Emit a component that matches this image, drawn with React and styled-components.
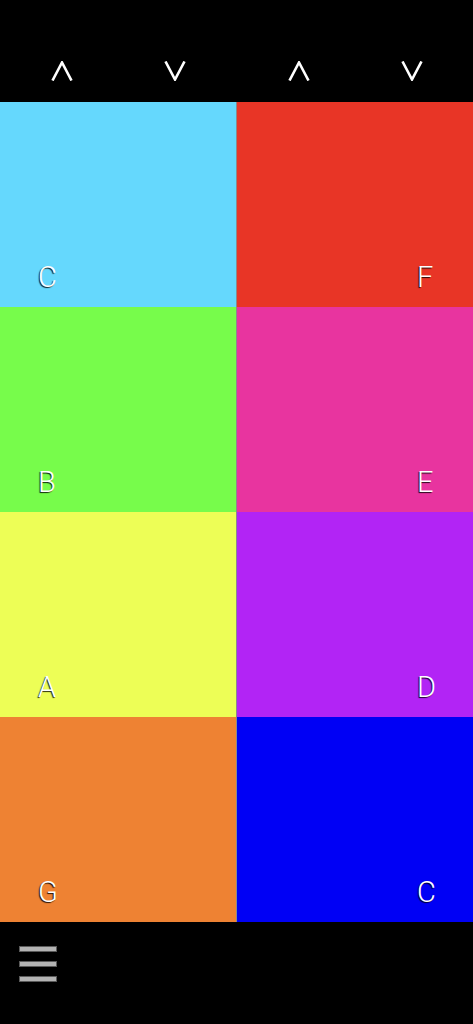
import React from "react";
import styled, { createGlobalStyle } from "styled-components";

const Global = createGlobalStyle`
  html, body { margin: 0; padding: 0; background: #000; }
  body { font-family: Roboto, "Liberation Sans", sans-serif; }
`;

const Screen = styled.div`
  width: 473px;
  height: 1024px;
  display: grid;
  grid-template-rows: 102px 820px 102px;
  background: #000;
  overflow: hidden;
`;

const TopBar = styled.div`
  display: grid;
  grid-template-columns: 236px 1px 236px;
  align-items: end;
  padding-bottom: 21px;
  box-sizing: border-box;
`;

const ArrowPair = styled.div`
  display: grid;
  grid-template-columns: 1fr 1fr;
  padding: 0 5px;
`;

const ArrowButton = styled.button`
  background: none;
  border: none;
  padding: 0;
  display: flex;
  justify-content: center;
  align-items: center;
  cursor: pointer;
  color: #fff;
`;

const Board = styled.div`
  display: grid;
  grid-template-columns: 236px 1px 236px;
`;

const Column = styled.div`
  display: grid;
  grid-template-rows: repeat(4, 205px);
`;

const Divider = styled.div`
  background: #8a8a8a;
`;

const Tile = styled.div`
  background: ${(p) => p.$color};
  display: flex;
  align-items: flex-end;
  padding-left: ${(p) => p.$inset}px;
  padding-bottom: 15px;
  box-sizing: border-box;
`;

const Label = styled.span`
  color: #fff;
  font-family: Roboto, "Liberation Sans", sans-serif;
  font-weight: 300;
  font-size: 29px;
  line-height: 29px;
  text-shadow: -1px 1px 1px rgba(0, 0, 0, 0.85);
`;

const BottomBar = styled.div`
  display: flex;
  align-items: flex-start;
  padding: 24px 0 0 19px;
`;

const Menu = styled.div`
  display: flex;
  flex-direction: column;
  gap: 9px;
`;

const MenuLine = styled.div`
  width: 38px;
  height: 6px;
  box-sizing: border-box;
  background: #b3b3b3;
  border: 1px solid #5a5a5a;
`;

const Chevron = ({ up }) => (
  <svg width="22" height="20" viewBox="0 0 22 20" fill="none">
    <polyline
      points={up ? "1.5,19.5 11,1.5 20.5,19.5" : "1.5,0.5 11,18.5 20.5,0.5"}
      stroke="#fff"
      strokeWidth="2.6"
      strokeLinejoin="miter"
    />
  </svg>
);

const left = [
  { color: "#65d8fd", label: "C" },
  { color: "#77fc4b", label: "B" },
  { color: "#edfe56", label: "A" },
  { color: "#ee8233", label: "G" },
];

const right = [
  { color: "#e83526", label: "F" },
  { color: "#e8349f", label: "E" },
  { color: "#b224f5", label: "D" },
  { color: "#0000f5", label: "C" },
];

export default function App() {
  return (
    <>
      <Global />
      <Screen>
        <TopBar>
          <ArrowPair>
            <ArrowButton aria-label="up"><Chevron up /></ArrowButton>
            <ArrowButton aria-label="down"><Chevron /></ArrowButton>
          </ArrowPair>
          <div />
          <ArrowPair>
            <ArrowButton aria-label="up"><Chevron up /></ArrowButton>
            <ArrowButton aria-label="down"><Chevron /></ArrowButton>
          </ArrowPair>
        </TopBar>
        <Board>
          <Column>
            {left.map((t, i) => (
              <Tile key={i} $color={t.color} $inset={38}>
                <Label>{t.label}</Label>
              </Tile>
            ))}
          </Column>
          <Divider />
          <Column>
            {right.map((t, i) => (
              <Tile key={i} $color={t.color} $inset={180}>
                <Label>{t.label}</Label>
              </Tile>
            ))}
          </Column>
        </Board>
        <BottomBar>
          <Menu>
            <MenuLine />
            <MenuLine />
            <MenuLine />
          </Menu>
        </BottomBar>
      </Screen>
    </>
  );
}
